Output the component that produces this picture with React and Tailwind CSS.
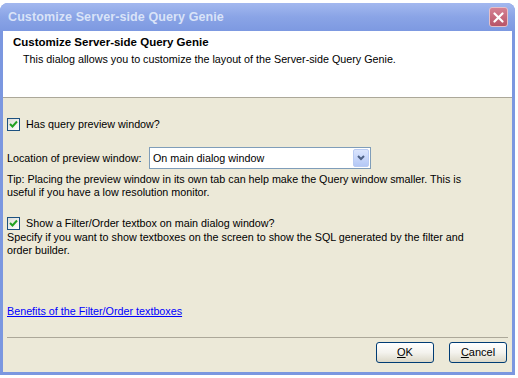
import React from "react";

function XpCheckbox() {
  return (
    <div className="flex h-[13px] w-[13px] shrink-0 items-center justify-center border border-[#1c5180] bg-gradient-to-br from-[#dcdcd7] to-white">
      <svg width="9" height="9" viewBox="0 0 9 9">
        <path d="M1 4 L3.5 6.5 L8 1.5" fill="none" stroke="#21a121" strokeWidth="2" />
      </svg>
    </div>
  );
}

function XpButton({ children }) {
  return (
    <button
      type="button"
      className="flex h-[21px] w-[58px] items-center justify-center rounded-[3px] border border-[#003c74] bg-gradient-to-b from-white via-[#f4f3ee] to-[#dcd8c8] text-[11px] text-black"
    >
      {children}
    </button>
  );
}

export default function App() {
  return (
    <div
      className="h-[378px] w-[518px] overflow-hidden bg-white"
      style={{ fontFamily: '"Liberation Sans", Arial, sans-serif' }}
    >
      <div className="mt-[3px] flex h-[372px] w-[515px] flex-col rounded-t-[8px] bg-[#7b97e0] px-[3px] pb-[3px]">
        {/* title bar */}
        <div className="-mx-[3px] flex h-[28px] items-center justify-between rounded-t-[8px] bg-gradient-to-b from-[#a3b8ef] via-[#8aa4e6] to-[#7d99e1] pl-[8px] pr-[7px]">
          <span className="text-[12.5px] font-bold tracking-[0.1px] text-[#d9e3f8]">Customize Server-side Query Genie</span>
          <div className="flex h-[20px] w-[19px] items-center justify-center rounded-[3px] border border-[#e6c0c8] bg-gradient-to-b from-[#d58193] to-[#b85468]">
            <svg width="11" height="11" viewBox="0 0 11 11">
              <path d="M1.5 1.5 L9.5 9.5 M9.5 1.5 L1.5 9.5" stroke="white" strokeWidth="2.2" strokeLinecap="round" />
            </svg>
          </div>
        </div>

        <div className="flex flex-1 flex-col bg-[#ece9d8] text-[10.75px] leading-[13px] text-black">
          {/* header */}
          <div className="h-[67px] border-b border-[#aca899] bg-white pl-[10px] pt-[5px]">
            <div className="text-[11.5px] font-bold">Customize Server-side Query Genie</div>
            <div className="mt-[4px] pl-[10px]">
              This dialog allows you to customize the layout of the Server-side Query Genie.
            </div>
          </div>

          <div className="flex flex-1 flex-col px-[4px]">
            <div className="mt-[20px] flex items-center gap-[6px]">
              <XpCheckbox />
              <span>Has query preview window?</span>
            </div>

            <div className="mt-[16px] flex items-center">
              <span className="w-[142px]">Location of preview window:</span>
              <div className="flex h-[22px] w-[222px] items-center justify-between border border-[#7f9db9] bg-white pl-[3px] pr-[1px]">
                <span>On main dialog window</span>
                <div className="flex h-[18px] w-[16px] items-center justify-center rounded-[2px] border border-[#b9cbf3] bg-gradient-to-b from-[#dbe5fd] to-[#b4c8f6]">
                  <svg width="8" height="6" viewBox="0 0 8 6">
                    <path d="M1 1 L4 4 L7 1" fill="none" stroke="#4d6185" strokeWidth="2" />
                  </svg>
                </div>
              </div>
            </div>

            <div className="mt-[4px]">
              Tip: Placing the preview window in its own tab can help make the Query window smaller. This is
              <br />
              useful if you have a low resolution monitor.
            </div>

            <div className="mt-[18px] flex items-center gap-[6px]">
              <XpCheckbox />
              <span>Show a Filter/Order textbox on main dialog window?</span>
            </div>
            <div className="mt-[1px]">
              Specify if you want to show textboxes on the screen to show the SQL generated by the filter and
              <br />
              order builder.
            </div>

            <div className="flex-1" />

            <a className="text-[#0000ff] underline">Benefits of the Filter/Order textboxes</a>
          </div>

          <div className="mx-[4px] mt-[19px] border-t border-[#aca899]" />
          <div className="mb-[9px] mr-[5px] mt-[4px] flex justify-end gap-[15px]">
            <XpButton>
              <span className="underline">O</span>K
            </XpButton>
            <XpButton>
              <span className="underline">C</span>ancel
            </XpButton>
          </div>
        </div>
      </div>
    </div>
  );
}
